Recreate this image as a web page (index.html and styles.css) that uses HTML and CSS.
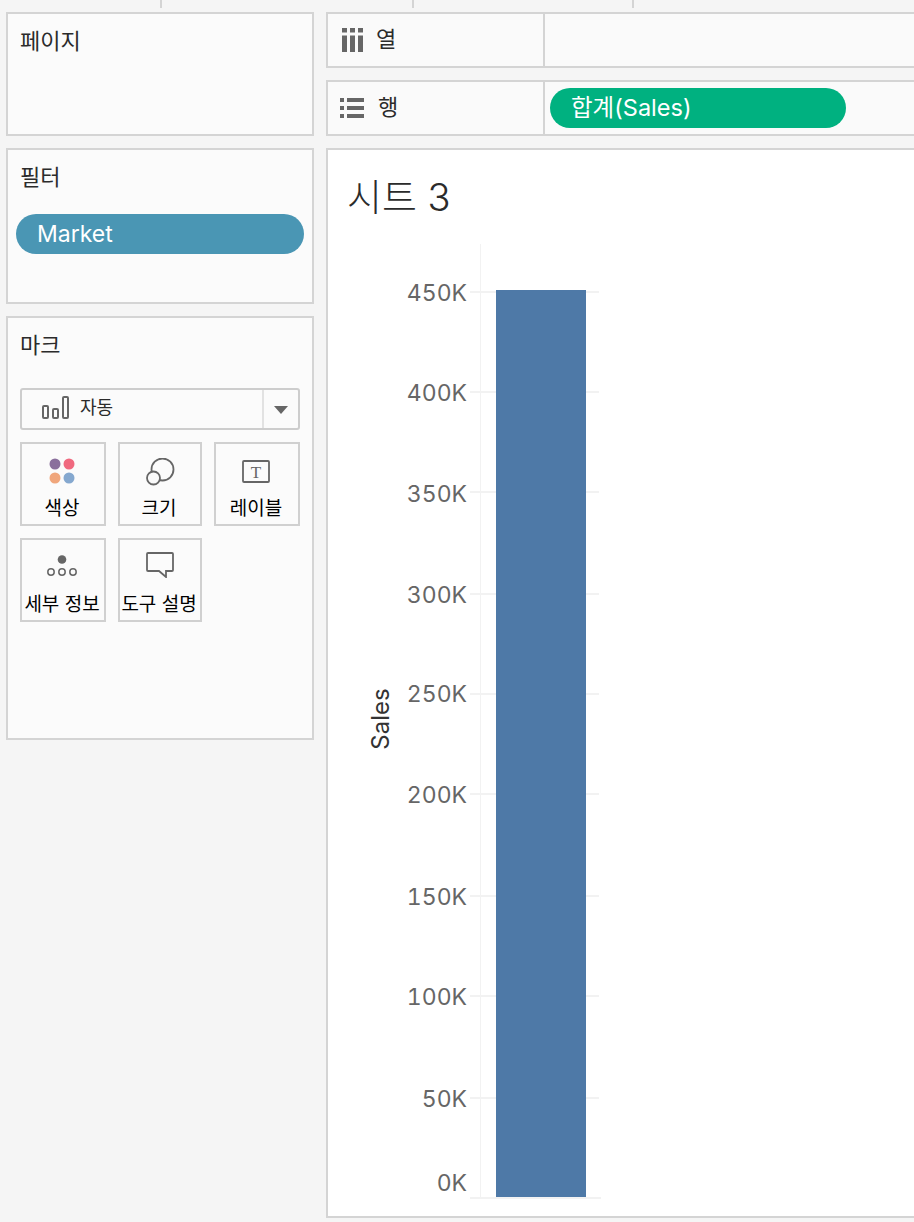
FILE: index.html
```html
<!DOCTYPE html>
<html lang="ko">
<head>
<meta charset="utf-8">
<title>시트 3</title>
<link rel="stylesheet" href="styles.css">
</head>
<body>
<div class="ticks"><span class="t1"></span><span class="t2"></span><span class="t3"></span></div>
<div class="layout">
  <aside class="side">
    <section class="card pages"><h2 class="card-title">페이지</h2></section>
    <section class="card filters">
      <h2 class="card-title">필터</h2>
      <div class="pill pill-blue">Market</div>
    </section>
    <section class="card marks">
      <h2 class="card-title">마크</h2>
      <div class="select">
        <div class="select-main">
          <svg class="bars-ic" width="28" height="24" viewBox="0 0 28 24"><g fill="none" stroke="#666" stroke-width="2"><rect x="1" y="10" width="5" height="12" rx="1"/><rect x="11" y="13" width="5" height="9" rx="1"/><rect x="21" y="1" width="5" height="21" rx="1"/></g></svg>
          <span class="select-label">자동</span>
        </div>
        <div class="select-arrow"><svg width="14" height="8" viewBox="0 0 14 8"><path d="M0 0H14L7 8Z" fill="#666"/></svg></div>
      </div>
      <div class="mark-grid">
        <div class="mark-btn">
          <svg class="ic-color" width="26" height="26" viewBox="0 0 26 26"><circle cx="6" cy="6" r="5.500" fill="#8a6f9c"/><circle cx="20" cy="6" r="5.500" fill="#f0697f"/><circle cx="6" cy="20" r="5.500" fill="#f0a67c"/><circle cx="20" cy="20" r="5.500" fill="#85a8cf"/></svg>
          <span>색상</span>
        </div>
        <div class="mark-btn">
          <svg class="ic-size" width="30" height="28" viewBox="0 0 30 28"><g fill="none" stroke="#666" stroke-width="1.800"><circle cx="16.500" cy="11.500" r="11"/><circle cx="7.500" cy="20" r="6.500" fill="#fafafa"/></g></svg>
          <span>크기</span>
        </div>
        <div class="mark-btn">
          <svg class="ic-label" width="28" height="26" viewBox="0 0 28 26"><rect x="1" y="3" width="26" height="21" rx="1" fill="none" stroke="#666" stroke-width="1.800"/><text x="14" y="19.500" class="t-glyph" text-anchor="middle">T</text></svg>
          <span>레이블</span>
        </div>
        <div class="mark-btn">
          <svg class="ic-detail" width="32" height="26" viewBox="0 0 32 26"><circle cx="16" cy="5.500" r="4.300" fill="#666"/><g fill="none" stroke="#666" stroke-width="1.500"><circle cx="5" cy="18" r="3.200"/><circle cx="16" cy="18" r="3.200"/><circle cx="27" cy="18" r="3.200"/></g></svg>
          <span>세부 정보</span>
        </div>
        <div class="mark-btn">
          <svg class="ic-tip" width="28" height="26" viewBox="0 0 28 26"><path d="M2 1H26Q27 1 27 2V18Q27 19 26 19H20V25L13 19H2Q1 19 1 18V2Q1 1 2 1Z" fill="none" stroke="#666" stroke-width="1.800"/></svg>
          <span>도구 설명</span>
        </div>
      </div>
    </section>
  </aside>
  <main class="main">
    <div class="shelf">
      <div class="shelf-head">
        <svg class="shelf-ic ic-cols" width="22" height="24" viewBox="0 0 22 24"><g fill="#666"><rect x="0" y="0" width="5" height="4.500"/><rect x="8" y="0" width="5" height="4.500"/><rect x="16" y="0" width="5" height="4.500"/><rect x="0" y="7.500" width="5" height="16.500"/><rect x="8" y="7.500" width="5" height="16.500"/><rect x="16" y="7.500" width="5" height="16.500"/></g></svg>
        <span class="shelf-label">열</span>
      </div>
      <div class="shelf-body"></div>
    </div>
    <div class="shelf">
      <div class="shelf-head">
        <svg class="shelf-ic" width="24" height="20" viewBox="0 0 24 20"><g fill="#666"><rect x="0" y="0" width="4" height="4"/><rect x="7" y="0" width="17" height="4"/><rect x="0" y="8" width="4" height="4"/><rect x="7" y="8" width="17" height="4"/><rect x="0" y="16" width="4" height="4"/><rect x="7" y="16" width="17" height="4"/></g></svg>
        <span class="shelf-label">행</span>
      </div>
      <div class="shelf-body"><div class="pill pill-green">합계(Sales)</div></div>
    </div>
    <section class="sheet">
      <h1 class="sheet-title">시트 3</h1>
      <div class="chart">
        <div class="axis-title">Sales</div>
        <div class="vline"></div>
        <div class="grid-line" style="top:47px"></div>
        <div class="grid-line" style="top:147px"></div>
        <div class="grid-line" style="top:247px"></div>
        <div class="grid-line" style="top:349px"></div>
        <div class="grid-line" style="top:449px"></div>
        <div class="grid-line" style="top:549px"></div>
        <div class="grid-line" style="top:651px"></div>
        <div class="grid-line" style="top:751px"></div>
        <div class="grid-line" style="top:853px"></div>
        <div class="grid-line zero" style="top:953px"></div>
        <div class="bar"></div>
        <div class="tick-label" style="top:49px">450K</div>
        <div class="tick-label" style="top:149px">400K</div>
        <div class="tick-label" style="top:250px">350K</div>
        <div class="tick-label" style="top:351px">300K</div>
        <div class="tick-label" style="top:450px">250K</div>
        <div class="tick-label" style="top:551px">200K</div>
        <div class="tick-label" style="top:653px">150K</div>
        <div class="tick-label" style="top:753px">100K</div>
        <div class="tick-label" style="top:855px">50K</div>
        <div class="tick-label" style="top:939px">0K</div>
      </div>
    </section>
  </main>
</div>
</body>
</html>
```
FILE: styles.css
```css
* { box-sizing: border-box; }
html, body { margin: 0; height: 100%; }
body {
  width: 914px;
  height: 1222px;
  overflow: hidden;
  background: #f5f5f5;
  color: #2b2b2b;
  font-family: "Inter", "Noto Sans CJK KR", sans-serif;
}
.ticks { display: flex; height: 8px; margin-bottom: 4px; }
.ticks span { display: block; height: 8px; border-right: 2px solid #d4d4d4; }
.t1 { width: 162px; }
.t2 { width: 252px; }
.t3 { width: 220px; }
.layout {
  display: grid;
  grid-template-columns: 308px 600px;
  column-gap: 12px;
  padding-left: 6px;
}
.side, .main { display: flex; flex-direction: column; gap: 12px; }
.card {
  background: #fbfbfb;
  border: 2px solid #d4d4d4;
  padding: 0 12px;
}
.card-title {
  margin: 0;
  font: 400 22px/28px "Noto Sans CJK KR", sans-serif;
  color: #2b2b2b;
  padding-top: 11px;
}
.pages { height: 124px; }
.filters { height: 156px; padding: 0 8px; }
.filters .card-title { padding-left: 4px; }
.marks { height: 424px; }
.pill {
  height: 40px;
  border-radius: 20px;
  color: #fff;
  font-size: 23px;
  line-height: 40px;
  padding-left: 21px;
}
.pill-blue { background: #4a96b4; margin-top: 25px; }
.pill-green {
  background: #00b180;
  width: 296px;
  font-size: 23.5px;
}
.select {
  display: flex;
  height: 42px;
  margin-top: 31px;
  border: 2px solid #cdcdcd;
  border-radius: 3px;
}
.select-main {
  flex: 1;
  display: flex;
  align-items: center;
  padding-left: 20px;
  gap: 10px;
}
.bars-ic { margin-top: -2px; }
.select-label { font: 400 18px/24px "Noto Sans CJK KR", sans-serif; margin-top: -6px; }
.select-arrow {
  width: 36px;
  border-left: 2px solid #e2e2e2;
  display: flex;
  align-items: center;
  justify-content: center;
  padding-top: 2px;
}
.mark-grid {
  display: grid;
  grid-template-columns: 86px 84px 86px;
  grid-auto-rows: 84px;
  column-gap: 12px;
  row-gap: 12px;
  margin-top: 12px;
  width: 280px;
}
.mark-btn {
  border: 2px solid #d0d0d0;
  display: flex;
  flex-direction: column;
  align-items: center;
  position: relative;
  padding-top: 14px;
  font: 400 19px/24px "Noto Sans CJK KR", sans-serif;
  color: #000;
  white-space: nowrap;
}
.mark-btn span { position: absolute; left: 0; right: 2px; top: 51px; text-align: center; }
.ic-color { margin-right: 3px; }
.ic-size { margin-left: 2px; }
.ic-label { margin-right: 2px; }
.ic-detail { margin-right: 3px; }
.ic-tip { margin-top: -2px; }
.t-glyph { font: 400 17px "Liberation Serif", serif; fill: #666; }
.shelf {
  display: flex;
  height: 56px;
  background: #fafafa;
  border: 2px solid #d4d4d4;
  border-right: 0;
}
.shelf-head {
  width: 217px;
  flex: none;
  display: flex;
  align-items: center;
  padding-left: 12px;
  border-right: 2px solid #d4d4d4;
}
.shelf-ic { flex: none; }
.ic-cols { margin-left: 2px; margin-right: -2px; }
.shelf-label {
  position: relative;
  margin-left: 14px;
  font: 400 22px/28px "Noto Sans CJK KR", sans-serif;
  top: -3px;
}
.shelf-body { flex: 1; padding: 6px 0 0 5px; }
.sheet {
  height: 1070px;
  background: #fff;
  border: 2px solid #d4d4d4;
  border-right: 0;
}
.sheet-title {
  margin: 0;
  font: 300 38px/48px "Inter", "Noto Sans CJK KR", sans-serif;
  color: #2b2b2b;
  padding: 23px 0 0 19px;
}
.chart { position: relative; height: 954px; margin-top: 23px; }
.axis-title {
  position: absolute;
  left: 20px;
  top: 462px;
  width: 66px;
  height: 26px;
  font-size: 24px;
  line-height: 26px;
  text-align: center;
  color: #333;
  transform: rotate(-90deg);
}
.vline { position: absolute; left: 152px; top: 0; width: 1px; height: 954px; background: #f2f2f2; }
.grid-line { position: absolute; left: 142px; width: 129px; height: 2px; background: #f2f2f2; }
.grid-line.zero { width: 131px; }
.bar { position: absolute; left: 168px; top: 46px; width: 90px; height: 907px; background: #4e79a7; }
.tick-label {
  position: absolute;
  left: 40px;
  width: 99px;
  text-align: right;
  font-size: 23px;
  font-variant-numeric: tabular-nums;
  line-height: 28px;
  margin-top: -14px;
  color: #666;
}
```
